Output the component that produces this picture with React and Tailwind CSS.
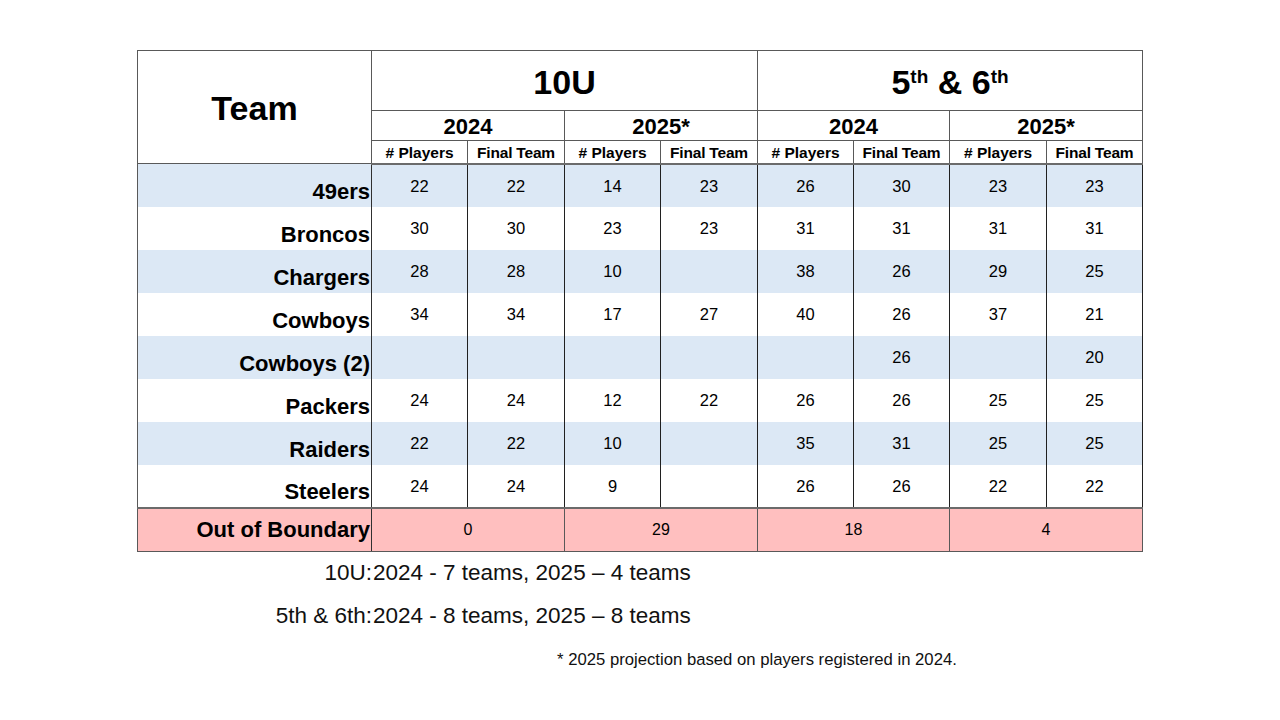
import React from "react";

const rows = [
  ["49ers", ["22", "22", "14", "23", "26", "30", "23", "23"]],
  ["Broncos", ["30", "30", "23", "23", "31", "31", "31", "31"]],
  ["Chargers", ["28", "28", "10", "", "38", "26", "29", "25"]],
  ["Cowboys", ["34", "34", "17", "27", "40", "26", "37", "21"]],
  ["Cowboys (2)", ["", "", "", "", "", "26", "", "20"]],
  ["Packers", ["24", "24", "12", "22", "26", "26", "25", "25"]],
  ["Raiders", ["22", "22", "10", "", "35", "31", "25", "25"]],
  ["Steelers", ["24", "24", "9", "", "26", "26", "22", "22"]],
];

const outOfBoundary = ["0", "29", "18", "4"];
const colWidths = ["w-[96px]", "w-[97px]", "w-[96px]", "w-[97px]", "w-[96px]", "w-[96px]", "w-[97px]", "w-[96px]"];

const App = () => {
  return (
    <div className="w-[1280px] h-[720px] bg-white pt-[50px] font-['Liberation_Sans',Arial,sans-serif] text-black">
      <div className="w-[1005px] ml-[137px]">
        {/* Main table */}
        <table className="w-[1005px] table-fixed border-collapse border border-[#595959]">
          <colgroup>
            <col className="w-[234px]" />
            {colWidths.map((w, i) => (
              <col key={i} className={w} />
            ))}
          </colgroup>
          <thead>
            <tr className="h-[60px]">
              <th rowSpan={3} className="border border-[#595959] text-[34px] font-bold leading-none align-middle pt-[2px]">
                Team
              </th>
              <th colSpan={4} className="border border-[#595959] text-[34px] font-bold leading-none align-middle pt-[2px]">
                10U
              </th>
              <th colSpan={4} className="border border-[#595959] text-[34px] font-bold leading-none align-middle pt-[2px] whitespace-nowrap">
                5<span className="text-[19px] leading-none align-[11px]">th</span> &amp; 6<span className="text-[19px] leading-none align-[11px]">th</span>
              </th>
            </tr>
            <tr className="h-[30px]">
              {["2024", "2025*", "2024", "2025*"].map((y, i) => (
                <th key={i} colSpan={2} className="border border-[#595959] text-[22px] font-bold leading-none pt-[2px]">
                  {y}
                </th>
              ))}
            </tr>
            <tr className="h-[23px]">
              {[0, 1, 2, 3].map((i) => (
                <React.Fragment key={i}>
                  <th className="border border-[#595959] border-b-2 border-b-[#6b6b6b] text-[15.5px] font-bold leading-none pt-[2px]">
                    # Players
                  </th>
                  <th className="border border-[#595959] border-b-2 border-b-[#6b6b6b] text-[15.5px] font-bold leading-none tracking-[-0.2px] pt-[2px]">
                    Final Team
                  </th>
                </React.Fragment>
              ))}
            </tr>
          </thead>
          <tbody>
            {rows.map(([team, vals], r) => (
              <tr key={team} className={`h-[43px] ${r % 2 === 0 ? "bg-[#dce8f5]" : "bg-white"}`}>
                <td className="border-r border-r-[#303030] border-l border-l-[#595959] text-right align-bottom pr-[1px] pb-[4px] text-[22px] font-bold leading-none whitespace-nowrap">
                  {team}
                </td>
                {vals.map((v, i) => (
                  <td key={i} className="border-r border-r-[#202020] text-center align-top pt-[13px] text-[16.5px] leading-none">
                    {v}
                  </td>
                ))}
              </tr>
            ))}
            <tr className="h-[44px] bg-[#ffbfbf] border-t-2 border-t-[#6b6b6b]">
              <td className="border border-[#595959] border-r-[#303030] text-right align-middle pr-[1px] text-[22px] font-bold leading-none whitespace-nowrap">
                Out of Boundary
              </td>
              {outOfBoundary.map((v, i) => (
                <td key={i} colSpan={2} className="border border-[#595959] text-center align-middle text-[16px] leading-none">
                  {v}
                </td>
              ))}
            </tr>
          </tbody>
        </table>

        {/* Team count summary */}
        <div className="grid grid-cols-[235px_1fr] gap-y-[15px] mt-[7px] text-[22.5px] leading-[28px] text-[#111]">
          <div className="text-right">10U:</div>
          <div className="pl-[1px]">2024 - 7 teams, 2025 – 4 teams</div>
          <div className="text-right">5th &amp; 6th:</div>
          <div className="pl-[1px]">2024 - 8 teams, 2025 – 8 teams</div>
        </div>

        <p className="ml-[420px] mt-[20px] text-[16.7px] leading-[20px] text-[#111]">
          * 2025 projection based on players registered in 2024.
        </p>
      </div>
    </div>
  );
};

export default App;
